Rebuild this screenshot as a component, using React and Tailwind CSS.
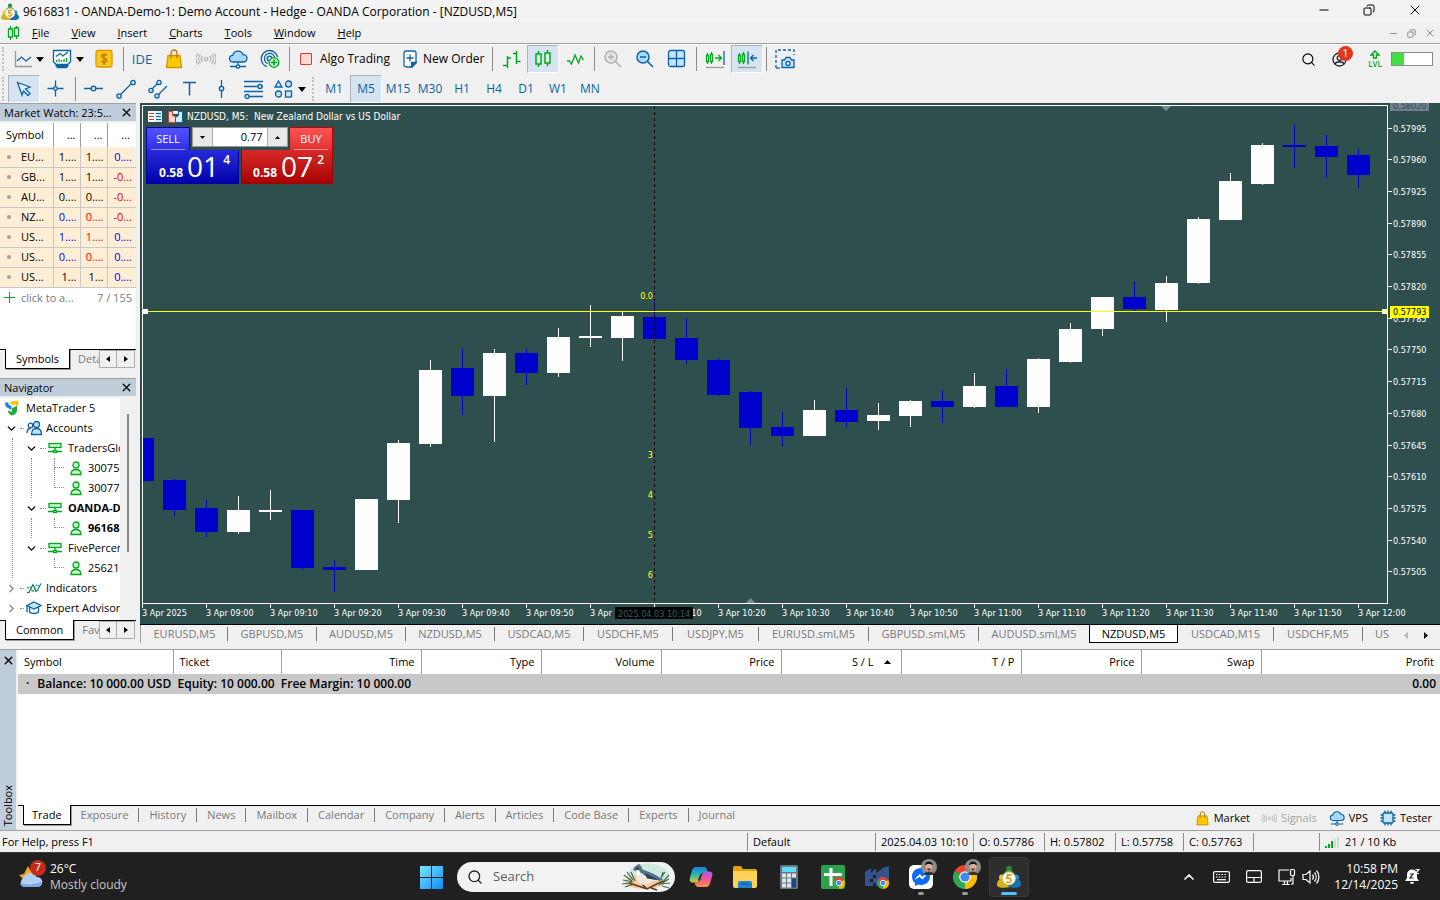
import React, { useState } from 'react';
import { Search, Minus, X, Copy, ChevronDown, ChevronRight, ChevronUp } from 'lucide-react';

const BLUE = '#0b63a5';
const SKY = '#c5e5fc';
const GREEN = '#00a81f';
const MINT = '#c9f3d0';

const Svg = ({ s = 20, w, h, children, ...rest }) => (
  <svg
    width={w || s}
    height={h || s}
    viewBox={`0 0 ${w || s} ${h || s}`}
    fill="none"
    stroke={BLUE}
    strokeWidth="1.3"
    className="shrink-0"
    aria-hidden="true"
    {...rest}
  >
    {children}
  </svg>
);

// ---------- toolbar icons ----------
const LineChartIcon = () => (
  <Svg>
    <path d="M3.500 2v15.500H20" stroke="#999" />
    <path d="M5 12l4.500-4 4.500 4 5-4" />
  </Svg>
);
const TemplateIcon = () => (
  <Svg>
    <path d="M1.500 1.500h17v11.500l-3 2.500h-11l-3-2.500z" fill="#fff" />
    <path d="M4 16.500h12l-1.500 2h-9z" fill={BLUE} />
    <path d="M4 7.500l4-3 3 2.500 5-4" />
    <path d="M4.500 13v-2M7 13v-3M9.500 13v-2M12 13v-3M14.500 13v-4" stroke={GREEN} />
  </Svg>
);
const DollarIcon = () => (
  <Svg>
    <rect x="2" y="1.500" width="16" height="16.500" rx="1.500" fill="#ffc91c" stroke="#d99a00" />
    <path d="M13 6.500c-1-1.300-5.500-1.500-5.500.8s5.500 1.700 5.500 4-4.500 2.300-5.800.7M10 4v12" stroke="#c27c00" strokeWidth="1.500" />
  </Svg>
);
const BagIcon = ({ s = 20 }) => (
  <svg width={s} height={s} viewBox="0 0 20 20" fill="none" strokeWidth="1.3" className="shrink-0" aria-hidden="true">
    <path d="M4 6.500h12l1.500 12h-15z" fill="#ffc800" stroke="#d09500" />
    <path d="M7 9.500V4a3 3 0 016 0v5.500" stroke="#b67d00" />
  </svg>
);
const SignalIcon = ({ s = 20 }) => (
  <svg width={s} height={s} viewBox="0 0 20 20" fill="none" stroke="#b5b5b5" strokeWidth="1.3" className="shrink-0" aria-hidden="true">
    <circle cx="10" cy="10" r="1.700" />
    <path d="M6.500 13a4.500 4.500 0 010-6M13.500 13a4.500 4.500 0 000-6M4.300 14.500a7 7 0 010-9M15.700 14.500a7 7 0 000-9M2 15.500a9 9 0 010-11M18 15.500a9 9 0 000-11" />
  </svg>
);
const CloudIcon = ({ s = 20 }) => (
  <svg width={s} height={s} viewBox="0 0 20 20" fill="none" stroke={BLUE} strokeWidth="1.3" className="shrink-0" aria-hidden="true">
    <path d="M5 13a3.300 3.300 0 01-.2-6.600 5.300 5.300 0 0110.200-.8A3.700 3.700 0 0115.500 13z" fill="#a9dafc" />
    <path d="M10 13v3M2 17.500h6M12 17.500h6" />
    <circle cx="10" cy="17.500" r="1.700" fill={SKY} />
  </svg>
);
const RadarIcon = () => (
  <Svg>
    <path d="M7 17.700A8.300 8.300 0 1117.600 8M8 14.500A5.200 5.200 0 1114.500 8" />
    <circle cx="9.500" cy="9.500" r="2.300" fill={SKY} />
    <circle cx="14" cy="13.500" r="4.800" fill={MINT} stroke={GREEN} />
    <path d="M14 10.500v6M11 13.500h6" stroke={GREEN} strokeWidth="1.600" />
  </Svg>
);
const NewOrderIcon = () => (
  <Svg w={14} h={18}>
    <path d="M1 3a2 2 0 012-2h8a2 2 0 012 2v10l-4 4H3a2 2 0 01-2-2z" fill="#fff" />
    <path d="M13 12.500l-4.500 4.500v-4.500z" fill={BLUE} />
    <path d="M7 4.500v7M3.500 8h7" />
  </Svg>
);
const BarsIcon = () => (
  <Svg stroke={GREEN} strokeWidth="1.500">
    <path d="M6.500 7v12M2 16.500h4.500M6.500 9H10M15.500 2v13M12 4.500h3.500M15.500 12.500h4" />
  </Svg>
);
const CandlesIcon = () => (
  <Svg stroke={GREEN} strokeWidth="1.500">
    <path d="M5.500 2v3M5.500 15v3M14.500 1v3M14.500 14v3" />
    <rect x="3" y="5" width="5" height="10" fill="#dff6e2" />
    <rect x="12" y="4" width="5" height="10" fill="#dff6e2" />
  </Svg>
);
const WaveIcon = () => (
  <Svg stroke={GREEN}>
    <path d="M2 12h2.500l2 3L10 6l3.500 8L16 7l2.500 4" />
  </Svg>
);
const ZoomIcon = ({ plus, stroke = BLUE, fill = '#a9dafc' }) => (
  <Svg stroke={stroke}>
    <circle cx="8" cy="8" r="6" fill={fill} strokeWidth="1.500" />
    <path d="M5 8h6M12.500 12.500L18 18" strokeWidth="1.500" />
    {plus && <path d="M8 5v6" />}
  </Svg>
);
const GridIcon = () => (
  <Svg>
    <rect x="1.500" y="1.500" width="16" height="16" rx="2" fill={SKY} />
    <path d="M9.500 1.500v16M1.500 9.500h16" />
  </Svg>
);
const ShiftIcon = ({ inward }) => (
  <Svg>
    <path d="M2.500 4v3M2.500 12v3M6.500 3v3M6.500 12v3M1.500 6.500h2v6h-2zM5.500 5.500h2v7h-2z" stroke={GREEN} />
    {inward ? (
      <path d="M11 2.500v13M20 9h-6M16.500 6l-3 3 3 3" />
    ) : (
      <>
        <path d="M10 9h6M13.500 6l3 3-3 3" stroke={GREEN} />
        <path d="M19 2v14" />
      </>
    )}
    <path d="M1 18.500h18" stroke="#999" />
  </Svg>
);
const CameraIcon = () => (
  <Svg>
    <path d="M1 19V1h18v5" strokeDasharray="3 2" />
    <path d="M1 19h4" />
    <path d="M7 11h2.500l1.500-2.500h4l1.500 2.500H19v7.500H7z" fill={SKY} />
    <circle cx="13" cy="14.500" r="2" fill="#fff" />
  </Svg>
);
const CursorIcon = () => (
  <Svg>
    <path d="M3.500 3.500l12.500 4.500-4.500 2 4.500 4.500-2 2-4.500-4.500-1.500 4z" fill="#e4f2fd" />
  </Svg>
);
const CrosshairIcon = () => (
  <Svg>
    <path d="M9.500 1.500v6M9.500 11.500v6M1.500 9.500h6M11.500 9.500h6" />
    <circle cx="9.500" cy="9.500" r="1.800" fill={SKY} />
  </Svg>
);
const HLineIcon = () => (
  <Svg>
    <path d="M0 9.500h7M12 9.500h7" />
    <circle cx="9.500" cy="9.500" r="2.300" fill={SKY} />
  </Svg>
);
const TrendIcon = () => (
  <Svg>
    <path d="M4.500 15.500l11-11" />
    <circle cx="17" cy="3.500" r="2.200" fill={SKY} />
    <circle cx="3" cy="17" r="2.200" fill={SKY} />
  </Svg>
);
const ChannelIcon = () => (
  <Svg>
    <path d="M4 10l5.500-5.500M10 16l9-9" />
    <circle cx="11" cy="3.500" r="2.100" fill={SKY} />
    <circle cx="3" cy="11.500" r="2.100" fill={SKY} />
    <circle cx="9" cy="17" r="2.100" fill={SKY} />
  </Svg>
);
const TextIcon = () => (
  <Svg>
    <path d="M3 3.500h13M9.500 3.500v13" strokeWidth="1.500" />
  </Svg>
);
const VLineIcon = () => (
  <Svg>
    <path d="M9.500 1v6.500M9.500 12v7" />
    <circle cx="9.500" cy="9.500" r="2.200" fill={SKY} />
  </Svg>
);
const FiboIcon = () => (
  <Svg>
    <path d="M0 2.500h19M0 7.500h14M18 7.500h1M0 12.500h19M5 17.500h14" />
    <circle cx="16" cy="7.500" r="2" fill={SKY} />
    <circle cx="3" cy="17.500" r="2" fill={SKY} />
  </Svg>
);
const ShapesIcon = () => (
  <Svg>
    <path d="M4.500 2L8 8H1z" fill={SKY} />
    <circle cx="14.500" cy="5" r="3" fill={SKY} />
    <circle cx="4.500" cy="15" r="3" fill={SKY} />
    <rect x="11.500" y="12" width="6" height="6" fill={SKY} />
  </Svg>
);
const Caret = () => (
  <svg width="8" height="5" className="shrink-0" aria-hidden="true">
    <path d="M0 0h8L4 5z" fill="#000" />
  </svg>
);

const ToolBtn = ({ label, active, wide, children }) => (
  <button
    aria-label={label}
    className={`flex h-7 shrink-0 items-center justify-center ${wide ? 'w-10 gap-1' : 'w-8'} ${
      active ? 'border border-[#a8b4c0] border-r-white border-b-white bg-[#d6e4f2]' : ''
    }`}
  >
    {children}
  </button>
);
const Sep = () => (
  <div className="flex w-1.5 shrink-0 justify-center">
    <div className="h-6 w-px bg-[#8c8c8c]" />
  </div>
);
const Grip = () => <div className="mr-1 ml-0.5 h-6 w-0.5 shrink-0 border-l-2 border-dotted border-[#c0c0c0]" />;

// ---------- logos ----------
const Mt5Logo = ({ s = 18 }) => (
  <svg width={s} height={s} viewBox="0 0 24 24" className="shrink-0" aria-hidden="true">
    <circle cx="12" cy="3.500" r="2.800" fill="#2f8a3a" />
    <path d="M5 13c1-5 4-8 7-8s6 3 7 8z" fill="#4fae48" />
    <circle cx="5" cy="12.500" r="3" fill="#e8c93a" />
    <path d="M0 20c0-4 2-6 5-6l8 8c-5 1.500-13 1-13-2z" fill="#d3b41c" />
    <circle cx="19" cy="12.500" r="3" fill="#2f8fc4" />
    <path d="M24 20c0-4-2-6-5-6l-8 8c5 1.500 13 1 13-2z" fill="#196fa8" />
    <circle cx="12" cy="13.500" r="6.500" fill="#fffdf5" stroke="#cdb98a" strokeWidth=".7" />
    <path d="M14.800 9.800h-4.300l-.5 3.500c4-1.300 5.700 3.700 2 4.200-1 .1-2-.2-2.700-.8" fill="none" stroke="#dd9a14" strokeWidth="1.700" />
  </svg>
);
const NavLogo = () => (
  <svg width="16" height="16" viewBox="0 0 16 16" className="shrink-0" aria-hidden="true">
    <path d="M1 2.500h3.500v2l3 1.500v4L3 7.500C1.500 6.500 1 5 1 2.500z" fill="#1c86e0" />
    <path d="M5.500 3C7 1.500 10 .5 14.500 1v3c0 1.500-1 2.500-3 2.500V4.500c-1.500 0-2 .5-3 1z" fill="#f7c21b" />
    <path d="M4 10.500l4 1.500V8l5-2v4.500c0 2.500-2 4-5 5-2.500-1-4-2.500-4-5z" fill="#22a93c" />
  </svg>
);
const Chrome = ({ s = 24 }) => (
  <svg width={s} height={s} viewBox="0 0 24 24" className="shrink-0" aria-hidden="true">
    <path d="M12 12L1.600 6A12 12 0 0122.400 6z" fill="#ea4335" />
    <path d="M12 12V24A12 12 0 011.600 6z" fill="#34a853" />
    <path d="M12 12l10.400-6A12 12 0 0112 24z" fill="#fbbc05" />
    <circle cx="12" cy="12" r="5.800" fill="#fff" />
    <circle cx="12" cy="12" r="4.600" fill="#4285f4" />
  </svg>
);

// ---------- data ----------
const menus = ['File', 'View', 'Insert', 'Charts', 'Tools', 'Window', 'Help'];
const frames = ['M1', 'M5', 'M15', 'M30', 'H1', 'H4', 'D1', 'W1', 'MN'];

const quotes = [
  ['EU...', '1....', '1....', '0....', 'text-black', 'text-black', 'text-[#0000f0]'],
  ['GB...', '1....', '1....', '-0...', 'text-black', 'text-black', 'text-[#f00000]'],
  ['AU...', '0....', '0....', '-0...', 'text-black', 'text-black', 'text-[#f00000]'],
  ['NZ...', '0....', '0....', '-0...', 'text-[#0000f0]', 'text-[#f00000]', 'text-[#f00000]'],
  ['US...', '1....', '1....', '0....', 'text-[#0000f0]', 'text-[#f00000]', 'text-[#0000f0]'],
  ['US...', '0....', '0....', '0....', 'text-[#0000f0]', 'text-[#f00000]', 'text-[#0000f0]'],
  ['US...', '1...', '1...', '0....', 'text-black', 'text-black', 'text-[#0000f0]'],
];

// [up, high, top, bottom, low]
const candles = [
  [0, 438, 438, 481, 481], [0, 479, 480, 510, 516], [0, 500, 508, 532, 537], [1, 496, 510, 532, 534],
  [1, 490, 510, 512, 520], [0, 510, 510, 568, 570], [0, 560, 567, 570, 592], [1, 499, 499, 570, 570],
  [1, 440, 443, 500, 523], [1, 360, 370, 444, 447], [0, 349, 368, 396, 415], [1, 349, 353, 396, 442],
  [0, 349, 353, 373, 385], [1, 328, 337, 373, 377], [1, 305, 336, 338, 347], [1, 312, 316, 338, 361],
  [0, 302, 317, 339, 339], [0, 318, 338, 360, 364], [0, 358, 360, 395, 396], [0, 391, 392, 428, 445],
  [0, 412, 427, 436, 446], [1, 400, 410, 436, 436], [0, 388, 410, 422, 427], [1, 403, 415, 421, 430],
  [1, 400, 401, 416, 427], [0, 390, 401, 407, 423], [1, 373, 386, 407, 408], [0, 369, 386, 407, 407],
  [1, 358, 359, 407, 413], [1, 323, 329, 362, 363], [1, 297, 297, 329, 336], [0, 282, 297, 309, 311],
  [1, 276, 283, 310, 322], [1, 217, 219, 283, 284], [1, 173, 181, 220, 220], [1, 143, 145, 184, 185],
  [0, 125, 145, 147, 168], [0, 135, 146, 157, 178], [0, 149, 155, 175, 188],
];
const prices = [
  [128, '0.57995'], [159, '0.57960'], [191, '0.57925'], [223, '0.57890'], [254, '0.57855'],
  [286, '0.57820'], [318, '0.57785'], [349, '0.57750'], [381, '0.57715'], [413, '0.57680'],
  [445, '0.57645'], [476, '0.57610'], [508, '0.57575'], [540, '0.57540'], [571, '0.57505'],
];
const times = [
  '3 Apr 2025', '3 Apr 09:00', '3 Apr 09:10', '3 Apr 09:20', '3 Apr 09:30', '3 Apr 09:40', '3 Apr 09:50',
  '3 Apr 10:00', '3 Apr 10:10', '3 Apr 10:20', '3 Apr 10:30', '3 Apr 10:40', '3 Apr 10:50', '3 Apr 11:00',
  '3 Apr 11:10', '3 Apr 11:20', '3 Apr 11:30', '3 Apr 11:40', '3 Apr 11:50', '3 Apr 12:00',
];

const chartTabs = [
  ['EURUSD,M5', 'w-[86px]'],
  ['GBPUSD,M5', 'w-[89px]'],
  ['AUDUSD,M5', 'w-[89px]'],
  ['NZDUSD,M5', 'w-[89px]'],
  ['USDCAD,M5', 'w-[89px]'],
  ['USDCHF,M5', 'w-[89px]'],
  ['USDJPY,M5', 'w-[86px]'],
  ['EURUSD.sml,M5', 'w-[110px]'],
  ['GBPUSD.sml,M5', 'w-[110px]'],
  ['AUDUSD.sml,M5', 'w-[110px]'],
  ['NZDUSD,M5', 'w-[89px]'],
  ['USDCAD,M15', 'w-24'],
  ['USDCHF,M5', 'w-[89px]'],
];
const toolTabs = [
  'Exposure', 'History', 'News', 'Mailbox', 'Calendar', 'Company', 'Alerts', 'Articles',
  'Code Base', 'Experts', 'Journal',
];

const Chart = () => (
  <svg
    viewBox="140 103 1300 521"
    className="block w-full bg-[#2f4f4f] font-['DejaVu_Sans_Condensed','DejaVu_Sans',sans-serif] text-[9px]"
    role="img"
    aria-label="NZDUSD M5 candlestick chart"
  >
    <defs>
      <clipPath id="plot">
        <rect x="143" y="106" width="1244" height="497" />
      </clipPath>
    </defs>
    <rect x="1390" y="103" width="39" height="8" fill="#708090" />
    <text x="1393" y="109" fill="#2f4f4f">0.58020</text>
    <g clipPath="url(#plot)" shapeRendering="crispEdges">
      {candles.map(([up, high, top, bottom, low], i) => {
        const x = 142 + i * 32;
        return (
          <g key={i} fill={up ? '#fff' : '#0000cd'}>
            <rect x={x} y={high} width="1" height={low - high} />
            <rect x={x - 11} y={top} width="23" height={bottom - top} />
          </g>
        );
      })}
    </g>
    <g shapeRendering="crispEdges">
      <path d="M142.500 603V105.500H1387.500V603.500H142" fill="none" stroke="#fff" />
      {prices.map(([y]) => <rect key={y} x="1388" y={y} width="4" height="1" fill="#fff" />)}
      {times.map((t, i) => <rect key={t} x={142 + i * 64} y="604" width="1" height="4" fill="#fff" />)}
      <path d="M654.500 106V603" stroke="#000" strokeDasharray="3 3" />
      <path d="M143 311.500H1388" stroke="#ffff00" />
      <rect x="143" y="309" width="5" height="5" fill="#fff" />
      <rect x="1382" y="309" width="5" height="5" fill="#ffffb0" />
    </g>
    <path d="M1161 106h10l-5 5zM745.500 603h10l-5-5z" fill="#778899" />
    <g fill="#fff">
      {prices.map(([y, p]) => <text key={p} x="1393" y={y + 4}>{p}</text>)}
      {times.map((t, i) => <text key={t} x={142 + i * 64} y="616">{t}</text>)}
    </g>
    <rect x="1390" y="306" width="39" height="12" fill="#ffff00" />
    <text x="1393" y="315" fill="#000">0.57793</text>
    <rect x="615" y="607" width="78" height="12" fill="#000" />
    <text x="618" y="617" fill="#2f6060">2025.04.03 10:14</text>
    <g fill="#ffff00" textAnchor="end">
      <text x="653" y="299">0.0</text>
      <text x="653" y="458">3</text>
      <text x="653" y="498">4</text>
      <text x="653" y="538">5</text>
      <text x="653" y="578">6</text>
    </g>
  </svg>
);

const TradePanel = () => {
  const [volume, setVolume] = useState('0.77');
  return (
    <div className="absolute top-6 left-1.5 flex w-[187px] flex-col text-white">
      <div className="flex h-[23px] items-start justify-between">
        <button className="h-full w-11 border border-b-0 border-[#0000b0] bg-linear-to-b from-[#5252ff] to-[#2e2ee4] px-1">
          <span className="block border-b border-[#9090ff] leading-5">SELL</span>
        </button>
        <div className="flex h-5 w-24 border border-[#9a9a9a] bg-white">
          <button aria-label="Decrease volume" className="flex w-5 items-center justify-center border-r border-[#adadad] bg-[#e8e8e8]">
            <svg width="5" height="3"><path d="M0 0h5L2.500 3z" /></svg>
          </button>
          <input
            aria-label="Volume"
            value={volume}
            onChange={(e) => setVolume(e.target.value)}
            className="w-0 flex-1 px-1 text-right text-black outline-none"
          />
          <button aria-label="Increase volume" className="flex w-5 items-center justify-center border-l border-[#adadad] bg-[#e8e8e8]">
            <svg width="5" height="3"><path d="M0 3h5L2.500 0z" /></svg>
          </button>
        </div>
        <button className="h-full w-11 border border-b-0 border-[#c00000] bg-linear-to-b from-[#ff5252] to-[#e03030] px-1">
          <span className="block border-b border-[#ff9090] leading-5">BUY</span>
        </button>
      </div>
      <div className="flex justify-between">
        <button aria-label="Sell price 0.58014" className="flex h-[34px] w-[93px] justify-end gap-1 border border-t-0 border-[#0000a0] bg-linear-to-b from-[#2828dc] to-[#0000a8] pr-2">
          <b className="self-end pb-0.5 text-xs">0.58</b>
          <span className="text-[28px] leading-8">01</span>
          <b className="pt-0.5 text-xs font-semibold">4</b>
        </button>
        <button aria-label="Buy price 0.58072" className="flex h-[34px] w-[92px] justify-end gap-1 border border-t-0 border-[#a00000] bg-linear-to-b from-[#d82828] to-[#a80000] pr-2">
          <b className="self-end pb-0.5 text-xs">0.58</b>
          <span className="text-[28px] leading-8">07</span>
          <b className="pt-0.5 text-xs font-semibold">2</b>
        </button>
      </div>
    </div>
  );
};

// ---------- left column ----------
const PanelHeader = ({ title }) => (
  <div className="flex h-5 shrink-0 items-center justify-between border-t border-b-2 border-t-[#a0a0a0] border-b-[#f0f0f0] bg-[#bfcddb] pr-[3px] pl-1">
    <span>{title}</span>
    <button aria-label={`Close ${title}`}><X size={13} strokeWidth={2.5} /></button>
  </div>
);
const PanelTabs = ({ active, next }) => (
  <div className="flex h-[21px] shrink-0 items-start bg-[#f0f0f0]">
    <div className="w-[5px] self-start border-t border-black" />
    <button className="h-5 border border-t-0 border-black bg-white px-2.5 shadow-[1px_1px_0_#999]">{active}</button>
    <div className="flex flex-1 overflow-hidden border-t border-black">
      <button className="w-0 flex-1 overflow-hidden pl-2 text-left whitespace-nowrap text-[#7a7a7a]">{next}</button>
      <button aria-label="Scroll left" className="flex h-[18px] w-[18px] items-center justify-center border border-[#adadad]">
        <svg width="4" height="6"><path d="M4 0v6L0 3z" /></svg>
      </button>
      <button aria-label="Scroll right" className="mr-px flex h-[18px] w-[18px] items-center justify-center border border-l-0 border-[#adadad]">
        <svg width="4" height="6"><path d="M0 0v6l4-3z" /></svg>
      </button>
    </div>
  </div>
);

const MarketWatch = () => (
  <section className="flex h-[267px] flex-col">
    <PanelHeader title="Market Watch: 23:5..." />
    <div className="flex-1 bg-white">
      <table className="w-full table-fixed border-collapse">
        <colgroup>
          <col />
          <col className="w-[27px]" />
          <col className="w-[27px]" />
          <col className="w-[29px]" />
        </colgroup>
        <thead>
          <tr className="h-6">
            <th className="border-r border-[#a0a0a0] pl-1.5 text-left font-normal">Symbol</th>
            <th className="border-r border-[#a0a0a0] pr-1 text-right font-normal">...</th>
            <th className="border-r border-[#a0a0a0] pr-1 text-right font-normal">...</th>
            <th className="pr-1.5 text-right font-normal">...</th>
          </tr>
        </thead>
        <tbody>
          {quotes.map(([sym, bid, ask, chg, c1, c2, c3], i) => (
            <tr key={i} className="h-5 border-b border-[#c8c8c8] bg-[#ffeed6]">
              <td className="border-r border-[#c8c8c8] pl-[7px]">
                <div className="flex items-center gap-2.5">
                  <span className="h-1 w-1 rounded-full bg-[#a0a0a0]" />
                  {sym}
                </div>
              </td>
              <td className={`border-r border-[#c8c8c8] pr-[3px] text-right ${c1}`}>{bid}</td>
              <td className={`border-r border-[#c8c8c8] pr-[3px] text-right ${c2}`}>{ask}</td>
              <td className={`pr-1 text-right ${c3}`}>{chg}</td>
            </tr>
          ))}
        </tbody>
      </table>
      <div className="flex h-5 items-center px-1 text-[#7a7a7a]">
        <svg width="11" height="11" className="mr-1.5" stroke={GREEN} strokeWidth="1"><path d="M5.500 0v11M0 5.500h11" /></svg>
        <button>click to a...</button>
        <span className="ml-auto">7 / 155</span>
      </div>
    </div>
    <PanelTabs active="Symbols" next="Details" />
  </section>
);

const PeopleIcon = () => (
  <Svg s={16}>
    <circle cx="10.500" cy="4.500" r="3" fill={SKY} />
    <circle cx="4.500" cy="5.500" r="2.300" fill="#fff" />
    <path d="M5.500 14.500c0-4 1.500-6 5-6s5 2 5 6zM1 13c0-3 .8-4.500 3.500-4.500" fill={SKY} />
  </Svg>
);
const ServerIcon = () => (
  <Svg w={14} h={12} stroke={GREEN}>
    <rect x="1" y="1.500" width="12" height="4" fill={MINT} />
    <path d="M7 5.500v3.500M0 9.500h5M9 9.500h5" />
    <rect x="5.500" y="8.500" width="3" height="2" fill={MINT} />
  </Svg>
);
const UserIcon = () => (
  <Svg w={12} h={15} stroke={GREEN}>
    <circle cx="6" cy="4" r="3" fill={MINT} />
    <path d="M1 13.500c0-3.500 1.500-5 5-5s5 1.500 5 5z" fill={MINT} />
  </Svg>
);
const IndicatorIcon = () => (
  <Svg w={16} h={12} strokeWidth="1.100">
    <path d="M1 10.500h2l4-8 3 7 1.500-1.500L15 1.500" />
    <path d="M1 6l3-1 3 5 3.500-7 2.500 1" stroke={GREEN} strokeDasharray="2 1" />
  </Svg>
);
const ExpertIcon = () => (
  <Svg w={16} h={14}>
    <path d="M8 1l7 3.500L8 8 1 4.500z" fill={SKY} />
    <path d="M3.500 6v5c2 2 7 2 9 0V6M1 5v6" fill="none" />
  </Svg>
);

const Branch = ({ open = true }) =>
  open ? (
    <ChevronDown size={13} strokeWidth={2.5} className="shrink-0" />
  ) : (
    <ChevronRight size={13} strokeWidth={2.5} className="shrink-0 text-[#8a8a8a]" />
  );
const Dots = ({ className }) => <span className={`shrink-0 border-t border-dotted border-[#8a8a8a] ${className}`} />;

const ServerNode = ({ name, accounts, bold, last }) => (
  <li className={bold ? 'font-bold' : ''}>
    <div className="flex h-5 items-center">
      <Branch />
      <Dots className="mx-0.5 w-1.5" />
      <ServerIcon />
      <span className="ml-1.5">{name}</span>
    </div>
    <ul className={`ml-1.5 border-l border-dotted ${last ? 'border-transparent' : 'border-[#8a8a8a]'}`}>
      {accounts.map((a, i) => (
        <li key={a} className="ml-[22px] flex h-5 items-center">
          <span className={`w-2.5 shrink-0 border-b border-l border-dotted border-[#8a8a8a] ${i ? '-mt-5 h-5' : '-mt-2.5 h-2.5'}`} />
          <span className="ml-1.5 flex items-center gap-1.5"><UserIcon />{a}</span>
        </li>
      ))}
    </ul>
  </li>
);

const RootNode = ({ icon, name, open }) => (
  <div className="flex h-5 items-center pl-[5px]">
    <Branch open={open} />
    <Dots className="mx-0.5 w-1" />
    {icon}
    <span className="ml-1">{name}</span>
  </div>
);

const Navigator = () => (
  <section className="flex flex-1 flex-col">
    <PanelHeader title="Navigator" />
    <div className="flex h-[222px]">
      <div className="w-[120px] overflow-hidden bg-white whitespace-nowrap">
        <div className="flex h-5 items-center gap-1.5 pl-1"><NavLogo />MetaTrader 5</div>
        <RootNode icon={<PeopleIcon />} name="Accounts" open />
        <ul className="ml-3 border-l border-dotted border-[#8a8a8a] pl-3">
          <ServerNode name="TradersGlobal" accounts={['300751', '300772']} />
          <ServerNode name="OANDA-Demo" accounts={['9616831']} bold />
          <ServerNode name="FivePercent" accounts={['256210']} last />
        </ul>
        <RootNode icon={<IndicatorIcon />} name="Indicators" open={false} />
        <RootNode icon={<ExpertIcon />} name="Expert Advisors" open={false} />
      </div>
      <div className="mt-4 ml-[7px] h-[138px] w-0.5 bg-[#8a8a8a]" />
    </div>
    <PanelTabs active="Common" next="Favorites" />
  </section>
);

// ---------- bottom ----------
const headCell = 'border-r border-[#a0a0a0] px-1.5 font-normal';
const columns = ['Time', 'Type', 'Volume', 'Price', 'S / L', 'T / P', 'Price', 'Swap'];

const Toolbox = () => (
  <section className="flex min-h-[181px] flex-1 border-t border-[#a0a0a0] bg-[#f0f0f0]">
    <div className="flex w-4 shrink-0 flex-col items-center justify-between bg-[#bfcddb] pt-1 pb-1">
      <button aria-label="Close toolbox"><X size={13} strokeWidth={2.5} /></button>
      <span className="rotate-180 leading-4 [writing-mode:vertical-rl]">Toolbox</span>
    </div>
    <div className="ml-0.5 flex min-w-0 flex-1 flex-col">
      <div className="flex-1 bg-white">
        <table className="w-full table-fixed border-collapse">
          <colgroup>
            <col className="w-[155px]" />
            <col className="w-[108px]" />
            <col className="w-[140px]" />
            {columns.slice(1).map((c, i) => <col key={i} className="w-[120px]" />)}
            <col />
          </colgroup>
          <thead>
            <tr className="h-6">
              <th className={`${headCell} text-left`}>Symbol</th>
              <th className={`${headCell} text-left`}>Ticket</th>
              {columns.map((c, i) => (
                <th key={i} className={`${headCell} text-right`}>
                  {c}
                  {c === 'S / L' && <svg width="7" height="4" className="mr-1 mb-0.5 ml-2.5 inline"><path d="M0 4h7L3.500 0z" /></svg>}
                </th>
              ))}
              <th className="px-1.5 text-right font-normal">Profit</th>
            </tr>
          </thead>
          <tbody>
            <tr className="h-5 bg-[#c8c8c8] text-xs font-semibold">
              <td colSpan={10} className="pl-2">
                <span className="mr-2">·</span>
                <span className="whitespace-pre">Balance: 10 000.00 USD  Equity: 10 000.00  Free Margin: 10 000.00</span>
              </td>
              <td className="pr-1 text-right">0.00</td>
            </tr>
          </tbody>
        </table>
      </div>
      <div className="flex h-[25px] items-start">
        <div className="w-[5px] border-t border-black" />
        <button className="h-5 border border-t-0 border-black bg-white px-2 shadow-[1px_1px_0_#999]">Trade</button>
        <div className="flex flex-1 items-start border-t border-black">
          {toolTabs.map((t, i) => (
            <button key={t} className="flex h-[18px] items-center text-[#7a7a7a]">
              {i > 0 && <i className="h-3.5 w-px bg-[#7a7a7a]" />}
              <span className="px-2.5">{t}</span>
            </button>
          ))}
          <div className="mr-2 ml-auto flex items-center gap-3 pt-1">
            <button className="flex items-center gap-1"><BagIcon s={15} />Market</button>
            <button className="flex items-center gap-1 text-[#a5a5a5]"><SignalIcon s={15} />Signals</button>
            <button className="flex items-center gap-1"><CloudIcon s={16} />VPS</button>
            <button className="flex items-center gap-1">
              <Svg s={16}>
                <rect x="3" y="3" width="10" height="10" rx="1" fill={SKY} />
                <path d="M5 .5v2.500M8 .5v2.500M11 .5v2.500M5 13v2.500M8 13v2.500M11 13v2.500M.5 5H3M.5 8H3M.5 11H3M13 5h2.500M13 8h2.500M13 11h2.500" />
              </Svg>
              Tester
            </button>
          </div>
        </div>
      </div>
    </div>
  </section>
);

const statusCell = 'flex h-[18px] items-center border-l border-[#8c8c8c] pl-[5px]';
const StatusBar = () => (
  <footer className="flex h-[22px] shrink-0 items-center border-t border-[#a0a0a0] bg-[#f0f0f0] whitespace-nowrap">
    <span className="flex-1 pl-0.5">For Help, press F1</span>
    <span className={`${statusCell} w-32`}>Default</span>
    <span className={`${statusCell} w-[98px]`}>2025.04.03 10:10</span>
    <span className={`${statusCell} w-[71px]`}>O: 0.57786</span>
    <span className={`${statusCell} w-[71px]`}>H: 0.57802</span>
    <span className={`${statusCell} w-[68px]`}>L: 0.57758</span>
    <span className={`${statusCell} w-[70px]`}>C: 0.57763</span>
    <span className={`${statusCell} w-[66px]`} />
    <span className={`${statusCell} w-[121px] gap-1.5`}>
      <svg width="14" height="12" fill={GREEN}>
        <path d="M0 10h2v2H0zM3 8h2v4H3zM6 5h2v7H6z" />
        <path d="M9 3h2v9H9zM12 1h2v11h-2z" fill="#d8d8d8" />
      </svg>
      21 / 10 Kb
    </span>
  </footer>
);

const Avatar = () => (
  <svg width="16" height="16" viewBox="0 0 16 16" className="absolute -top-1 -right-1" aria-hidden="true">
    <circle cx="8" cy="8" r="8" fill="#8d8d88" />
    <path d="M3 15c1-3 9-3 10 0a8 8 0 01-10 0z" fill="#333" />
    <ellipse cx="8" cy="7.500" rx="3.500" ry="4.500" fill="#d9b29a" />
    <path d="M4 6.500C3.500 1 12.500 1 12 6.500 10 4.500 6 4.500 4 6.500z" fill="#1c1512" />
    <path d="M5.500 9.500h5L8 12z" fill="#5a3a2c" />
  </svg>
);
const Running = ({ active }) => (
  <span className={`absolute -bottom-1 left-1/2 h-[3px] -translate-x-1/2 rounded-full ${active ? 'w-4 bg-[#4cc2ff]' : 'w-1.5 bg-[#9a9a9a]'}`} />
);
const TaskApp = ({ label, children, active }) => (
  <button aria-label={label} className={`flex h-10 w-10 items-center justify-center rounded ${active ? 'border border-[#3a3a3a] bg-[#2e2e2e]' : ''}`}>
    <span className="relative flex h-7 w-6 items-center justify-center">{children}</span>
  </button>
);

const Bird = () => (
  <svg width="50" height="28" viewBox="0 0 50 28" className="shrink-0" aria-hidden="true">
    <ellipse cx="27" cy="12" rx="20" ry="11.500" fill="#cfe8e0" />
    <ellipse cx="24" cy="19" rx="20" ry="7" fill="#f3c9a0" />
    <g stroke="#3c6b4c" strokeWidth="1.200">
      <path d="M2 17l10 2M3 12l8 6M6 9l6 8M1 21l10-1M10 9l4 9M4 24l9-3M38 22l10-6M40 21l9-1M38 18l6-9M42 19l6-7M41 23l7 2M40 16l2-7" />
    </g>
    <path d="M8 20l18 6 16-8M26 26l-6-6M30 25l6 2" stroke="#5d3a2c" strokeWidth="1.600" fill="none" />
    <path d="M16 8c3-1 7 0 10 2 5 1 10 3 16 6-4 1-9 2-12 3-4 4-10 4-13 0-2-3-2-7-1-11z" fill="#f0e6da" />
    <path d="M12 7c1-2 1.500-4 6-6 1.500 1 3 3 3.500 5.500 5 2 12 4 21 10.500-6 .5-12 0-16-2.500C23 12 20 9 17 9z" fill="#54718a" />
    <path d="M15 7.500c2-1 4 0 4 2l-2 4c-1-2-1-4-2-6z" fill="#fff" />
    <path d="M24 10l14 7-12-1.500z" fill="#2d4357" />
    <circle cx="16.500" cy="5.500" r=".9" fill="#111" />
  </svg>
);

const Taskbar = () => (
  <nav aria-label="Taskbar" className="grid h-12 shrink-0 grid-cols-[1fr_auto_1fr] items-center border-t border-[#3a3a3a] bg-[#202020] text-xs text-white">
    <button className="flex items-center gap-1.5 justify-self-start pl-[18px] text-left">
      <span className="relative">
        <svg width="26" height="26" viewBox="0 0 26 26" aria-hidden="true">
          <path d="M1 11l5-1 4-8 2 4 6 3v6H5z" fill="#f5a623" />
          <path d="M6 23a5 5 0 01-.5-9 7 7 0 0113-1 5 5 0 011.500 10z" fill="#b4cdf6" />
          <path d="M6 23a5 5 0 01-4-4c6 2 14 2 22-1a5 5 0 01-4 5z" fill="#7fa8ea" />
        </svg>
        <span className="absolute -top-1 -right-0.5 flex h-4 w-4 items-center justify-center rounded-full bg-[#c42b1c] text-[11px]">7</span>
      </span>
      <span className="leading-4">
        <span className="block">26°C</span>
        <span className="block text-[#c8c8c8]">Mostly cloudy</span>
      </span>
    </button>
    <div className="flex items-center gap-1">
      <button aria-label="Start" className="flex h-10 w-10 items-center justify-center">
        <svg width="24" height="24" viewBox="0 0 24 24">
          <defs>
            <linearGradient id="win" x1="0" y1="0" x2="24" y2="24" gradientUnits="userSpaceOnUse">
              <stop stopColor="#7eeaff" />
              <stop offset="1" stopColor="#0c8cf5" />
            </linearGradient>
          </defs>
          <path d="M1 1h11v11H1zM13 1h11v11H13zM1 13h11v11H1zM13 13h11v11H13z" fill="url(#win)" />
        </svg>
      </button>
      <label className="mx-0.5 flex h-[30px] w-[218px] items-center gap-2.5 rounded-full bg-[#f2f2f2] pr-1 pl-2.5">
        <Search size={16} strokeWidth={2} className="shrink-0 text-[#222]" />
        <input aria-label="Search" placeholder="Search" className="w-0 flex-1 text-[13px] text-black outline-none placeholder:text-[#5f5f5f]" />
        <Bird />
      </label>
      <TaskApp label="Copilot">
        <svg width="24" height="24" viewBox="0 0 24 24" fill="none">
          <defs>
            <linearGradient id="cpA" x1="0" y1="0" x2="0" y2="1">
              <stop stopColor="#1b7fe0" /><stop offset=".5" stopColor="#28b8b0" /><stop offset="1" stopColor="#e8c52a" />
            </linearGradient>
            <linearGradient id="cpB" x1="0" y1="0" x2="0" y2="1">
              <stop stopColor="#a45ae8" /><stop offset=".5" stopColor="#f0569a" /><stop offset="1" stopColor="#f5953a" />
            </linearGradient>
          </defs>
          <path d="M7 2h8c2 0 2.500 1 3 3l.5 2h-3c-2 0-3 1-3.500 3l-1.500 5c-.5 2-2 2.500-3 2.500H4c-3 0-4-2-3-5l2-7c.7-2.300 2-3.500 4-3.500z" fill="url(#cpA)" />
          <path d="M17 22H9.500c-2 0-3-1-3.500-3l-.5-1.500h2c2 0 3.500-1 4-3L13 9.500c.5-2 1.500-3 3.500-3H20c3 0 4 2 3 5l-2 7c-.7 2.300-2 3.500-4 3.500z" fill="url(#cpB)" />
          <path d="M13 9l-3 7-1-1 2.500-6z" fill="#202020" />
        </svg>
      </TaskApp>
      <TaskApp label="File Explorer">
        <svg width="24" height="22" viewBox="0 0 24 22">
          <path d="M0 2a2 2 0 012-2h6l2 3h12a2 2 0 012 2v4H0z" fill="#e0a30c" />
          <path d="M0 5h24v15a2 2 0 01-2 2H2a2 2 0 01-2-2z" fill="#ffd257" />
          <path d="M5 22v-5a2 2 0 012-2h10a2 2 0 012 2v5z" fill="#1f7fd0" />
          <path d="M8 18h8" stroke="#0d559a" />
        </svg>
      </TaskApp>
      <TaskApp label="Calculator">
        <svg width="18" height="24" viewBox="0 0 18 24">
          <rect width="18" height="24" rx="1.500" fill="#6c7680" />
          <rect x="2" y="2" width="14" height="5" fill="#5fdcf7" />
          <path d="M2 8.500h4v4H2zM7 8.500h4v4H7zM12 8.500h4v4h-4zM2 13.500h4v4H2zM7 13.500h4v4H7zM2 18.500h4v4H2zM7 18.500h4v4H7z" fill="#dfe4e8" />
          <path d="M12 13.500h4v9h-4z" fill="#134a8c" />
        </svg>
      </TaskApp>
      <TaskApp label="Sheets">
        <svg width="24" height="24" viewBox="0 0 24 24">
          <rect width="24" height="24" rx="2" fill="#2ba24c" />
          <path d="M10 3v18M3 9.500h18" stroke="#fff" strokeWidth="3" />
        </svg>
        <span className="absolute right-0 bottom-0.5"><Chrome s={12} /></span>
      </TaskApp>
      <TaskApp label="Factory">
        <svg width="24" height="22" viewBox="0 0 24 22">
          <path d="M0 6l6-4v5l5-5v5l6-4V2l7-2v20H0z" fill="#35528c" />
          <path d="M8 9h3v3H8zM5 13h3v3H5zM8 17h3v3H8z" fill="#202020" />
        </svg>
        <span className="absolute right-0 bottom-0.5"><Chrome s={12} /></span>
      </TaskApp>
      <TaskApp label="Messenger">
        <svg width="24" height="24" viewBox="0 0 24 24">
          <rect width="24" height="24" rx="5" fill="#fff" />
          <path d="M12 3c5.500 0 9 4 9 8.500S17.500 20 12 20c-1 0-2-.1-2.800-.4L6 21v-3c-2-1.500-3-4-3-6.500C3 7 6.500 3 12 3z" fill="#0a6cff" />
          <path d="M6.500 14l4-4.500 3 2.500 4-2.500-4 4.500-3-2.500z" fill="#fff" stroke="#fff" />
        </svg>
        <Avatar />
        <Running />
      </TaskApp>
      <TaskApp label="Chrome">
        <Chrome />
        <Avatar />
        <Running />
      </TaskApp>
      <TaskApp label="MetaTrader 5" active>
        <Mt5Logo s={24} />
        <Running active />
      </TaskApp>
    </div>
    <div className="flex items-center justify-self-end pr-5">
      <button aria-label="Hidden icons" className="mr-4"><ChevronUp size={16} strokeWidth={2.5} /></button>
      <Svg w={17} h={12} stroke="#fff" strokeWidth="1.200" className="mr-4">
        <rect x=".6" y=".6" width="15.800" height="10.800" rx="1.500" />
        <path d="M3 3.500h11M3 6h11" strokeDasharray="1.500 1.300" />
        <path d="M4 8.700h9" />
      </Svg>
      <Svg w={16} h={13} stroke="#fff" strokeWidth="1.200" className="mr-4">
        <rect x=".6" y=".6" width="14.800" height="11.800" rx="1.500" />
        <path d="M1 7.500h14M8 7.500V12" />
      </Svg>
      <Svg w={18} h={18} stroke="#fff" strokeWidth="1.200" className="mr-1.5">
        <path d="M11 2H1v11h12V10M4 16.500h8M6.500 13v3.500M9.500 13v3.500M15 8v8h-2" />
        <rect x="12.500" y="1.500" width="4" height="6" rx="1" />
      </Svg>
      <Svg w={18} h={16} stroke="#fff" strokeWidth="1.200" className="mr-3.5">
        <path d="M1 5.500h3l4-3.500v12l-4-3.500H1zM10.500 5.500a4 4 0 010 5M12.500 3.500a7 7 0 010 9M14.500 1.500a10 10 0 010 13" />
      </Svg>
      <div className="mr-1.5 text-right leading-4">
        <div>10:58 PM</div>
        <div>12/14/2025</div>
      </div>
      <Svg w={16} h={17} stroke="none" fill="#fff">
        <path d="M1 13l2-3V6.500a5 5 0 0110 0V10l2 3zM6 14h4a2 2 0 01-4 0z" />
        <path d="M6 6h3L6 10h3.500" stroke="#202020" strokeWidth="1.200" fill="none" />
        <path d="M11.500 1.500H15l-3.500 4H15" stroke="#fff" strokeWidth="1.200" fill="none" />
      </Svg>
    </div>
  </nav>
);

const App = () => {
  const [frame, setFrame] = useState('M5');
  const [tab, setTab] = useState(10);

  return (
    <div className="flex min-h-screen flex-col bg-[#f0f0f0] font-['Open_Sans','Noto_Sans',sans-serif] text-[11px] leading-4 text-black">
      {/* TITLE BAR */}
      <header className="flex h-[23px] shrink-0 items-center bg-[#f3f3f3] pl-px">
        <Mt5Logo />
        <h1 className="ml-1 text-xs">9616831 - OANDA-Demo-1: Demo Account - Hedge - OANDA Corporation - [NZDUSD,M5]</h1>
        <div className="mr-[17px] ml-auto flex items-center gap-8 pb-1">
          <button aria-label="Minimize"><Minus size={14} strokeWidth={2} /></button>
          <button aria-label="Restore"><Copy size={12} strokeWidth={2} className="-scale-x-100" /></button>
          <button aria-label="Close"><X size={16} strokeWidth={1.5} /></button>
        </div>
      </header>

      {/* MENU */}
      <div className="flex h-[21px] shrink-0 items-center border-b border-[#a0a0a0] pl-[7px]">
        <Svg w={13} h={14} stroke={GREEN} className="mr-3">
          <path d="M3.500 0v3M3.500 11v3M9.500 0v2M9.500 10v3M1.500 3h4v8h-4zM7.500 2h4v8h-4z" />
        </Svg>
        <div className="flex gap-[22px]">
          {menus.map((m) => (
            <button key={m}><u>{m[0]}</u>{m.slice(1)}</button>
          ))}
        </div>
        <div className="mr-1 ml-auto flex items-center gap-2 text-[#8a8a8a]">
          <button aria-label="Minimize chart"><Minus size={11} /></button>
          <button aria-label="Restore chart"><Copy size={9} strokeWidth={2.5} className="-scale-x-100" /></button>
          <button aria-label="Close chart"><X size={12} /></button>
        </div>
      </div>

      {/* TOOLBARS */}
      <div className="flex h-[59px] shrink-0 flex-col gap-0.5 border-t border-white">
        <div className="flex h-7 items-center">
          <Grip />
          <ToolBtn label="Chart type" wide><LineChartIcon /><Caret /></ToolBtn>
          <ToolBtn label="Templates" wide><TemplateIcon /><Caret /></ToolBtn>
          <ToolBtn label="Symbols"><DollarIcon /></ToolBtn>
          <Sep />
          <button className="w-8 text-[13px] text-[#0b63a5]">IDE</button>
          <ToolBtn label="Market"><BagIcon /></ToolBtn>
          <ToolBtn label="Signals"><SignalIcon /></ToolBtn>
          <ToolBtn label="Cloud"><CloudIcon /></ToolBtn>
          <ToolBtn label="Radar"><RadarIcon /></ToolBtn>
          <Sep />
          <button className="flex h-7 w-[103px] items-center gap-2 pl-2 text-xs">
            <span className="h-3 w-3 shrink-0 rounded-[1px] border border-[#d43c36] bg-[#ffd6d0]" />
            Algo Trading
          </button>
          <button className="flex h-7 w-[94px] items-center gap-1.5 pl-2 text-xs whitespace-nowrap"><NewOrderIcon />New Order</button>
          <Sep />
          <ToolBtn label="Bar chart"><BarsIcon /></ToolBtn>
          <ToolBtn label="Candlesticks" active><CandlesIcon /></ToolBtn>
          <ToolBtn label="Line"><WaveIcon /></ToolBtn>
          <Sep />
          <ToolBtn label="Zoom in"><ZoomIcon plus stroke="#b0b0b0" fill="#e6e6e6" /></ToolBtn>
          <ToolBtn label="Zoom out"><ZoomIcon /></ToolBtn>
          <ToolBtn label="Tile windows"><GridIcon /></ToolBtn>
          <Sep />
          <ToolBtn label="Auto scroll"><ShiftIcon /></ToolBtn>
          <ToolBtn label="Chart shift" active><ShiftIcon inward /></ToolBtn>
          <Sep />
          <ToolBtn label="Screenshot"><CameraIcon /></ToolBtn>

          <div className="mr-[7px] ml-auto flex items-center">
            <button aria-label="Search" className="mr-4"><Search size={15} strokeWidth={1.8} /></button>
            <button aria-label="Account, 1 notification" className="relative mr-5">
              <Svg s={15} stroke="#222">
                <circle cx="7.500" cy="7.500" r="6.500" />
                <circle cx="7.500" cy="6" r="2.300" />
                <path d="M3 12c1-3 8-3 9 0" />
              </Svg>
              <span className="absolute -top-1.5 -right-1.5 flex h-[15px] w-[15px] items-center justify-center rounded-full bg-[#e03820] text-white">1</span>
            </button>
            <div className="mr-2 flex w-4 flex-col items-center gap-px text-[8px] leading-2 font-semibold text-[#00a81f]">
              <Svg w={10} h={9} stroke={GREEN}>
                <path d="M5 1l4 4H6.500v3h-3V5H1z" fill={MINT} />
              </Svg>
              LVL
            </div>
            <div className="h-3.5 w-[42px] border border-[#8a8a8a] bg-white">
              <div className="h-full w-3 bg-[#3fe03f]" />
            </div>
          </div>
        </div>
        <div className="flex h-7 items-center">
          <Grip />
          <ToolBtn label="Cursor" active><CursorIcon /></ToolBtn>
          <ToolBtn label="Crosshair"><CrosshairIcon /></ToolBtn>
          <Sep />
          <ToolBtn label="Horizontal line"><HLineIcon /></ToolBtn>
          <ToolBtn label="Trendline"><TrendIcon /></ToolBtn>
          <ToolBtn label="Channel"><ChannelIcon /></ToolBtn>
          <ToolBtn label="Text"><TextIcon /></ToolBtn>
          <ToolBtn label="Vertical line"><VLineIcon /></ToolBtn>
          <ToolBtn label="Fibonacci"><FiboIcon /></ToolBtn>
          <ToolBtn label="Shapes" wide><ShapesIcon /><Caret /></ToolBtn>
          <Grip />
          {frames.map((f) => (
            <button
              key={f}
              onClick={() => setFrame(f)}
              className={`h-7 w-8 text-xs text-[#0b63a5] ${
                f === frame ? 'border border-[#a8b4c0] border-r-white border-b-white bg-[#d6e4f2]' : ''
              }`}
            >
              {f}
            </button>
          ))}
        </div>
      </div>

      {/* WORKSPACE */}
      <main className="flex shrink-0">
        <aside className="flex w-[136px] shrink-0 flex-col gap-2">
          <MarketWatch />
          <Navigator />
        </aside>
        <div className="ml-1 flex min-w-0 flex-1 flex-col">
          <div className="relative">
            <Chart />
            <div className="absolute top-1.5 left-2 flex items-center font-['DejaVu_Sans_Condensed','DejaVu_Sans',sans-serif] text-[10px] text-white">
              <svg width="14" height="12" aria-hidden="true">
                <path d="M0 0h7v11H0z" fill="#fff" />
                <path d="M7 0h7v11H7z" fill="#d5ecfc" />
                <path d="M1 2.500h5M1 5.500h5M1 8.500h5" stroke="#d43c36" />
                <path d="M8 2.500h5M8 5.500h5M8 8.500h5" stroke={BLUE} />
              </svg>
              <svg width="15" height="12" className="mr-1 ml-1.5" aria-hidden="true">
                <path d="M.5.500h4v4l3 1v6h-7z" fill="#ffd6d0" stroke="#d43c36" />
                <path d="M14.500.500h-4v4l-3 2v5h7z" fill="#d5ecfc" stroke={BLUE} />
                <path d="M5 0h5v3H5z" fill="#eee" />
              </svg>
              <span className="whitespace-pre">NZDUSD, M5:  New Zealand Dollar vs US Dollar</span>
            </div>
            <TradePanel />
          </div>
          <div className="flex h-[25px] items-start border-t border-black">
            <div className="flex min-w-0 flex-1 items-start overflow-hidden border-l border-[#a0a0a0] pl-px whitespace-nowrap">
              {chartTabs.map(([t, width], i) => (
                <button
                  key={i}
                  onClick={() => setTab(i)}
                  className={`flex h-[18px] shrink-0 items-center ${width} ${
                    i === tab ? 'border border-t-0 border-black bg-white' : 'text-[#7a7a7a]'
                  }`}
                >
                  <span className="flex-1 text-center">{t}</span>
                  {i !== tab && i !== tab - 1 && <i className="h-3.5 w-px bg-[#7a7a7a]" />}
                </button>
              ))}
              <button className="h-[18px] w-0 flex-1 overflow-hidden pl-3 text-left text-[#7a7a7a]">US</button>
            </div>
            <div className="flex w-[50px] items-center gap-4 self-stretch pb-1 pl-3.5">
              <button aria-label="Previous charts"><svg width="4" height="7"><path d="M4 0v7L0 3.500z" fill="#b5b5b5" /></svg></button>
              <button aria-label="Next charts"><svg width="4" height="7"><path d="M0 0v7l4-3.500z" /></svg></button>
            </div>
          </div>
        </div>
      </main>

      <Toolbox />
      <StatusBar />
      <Taskbar />
    </div>
  );
};

export default App;
